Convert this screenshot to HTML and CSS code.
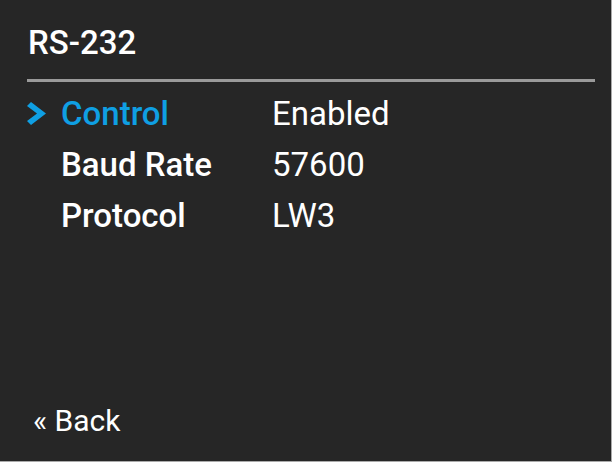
FILE: index.html
```html
<!DOCTYPE html>
<html>
<head>
    <title>RS-232</title>
    <link rel="stylesheet" href="styles.css">
</head>
<body>

<div class="screen">
    <h1 class="title">RS-232</h1>

    <ul class="menu">
        <li class="item selected">
            <svg class="cursor" width="19" height="23" viewBox="0 0 19 23">
                <polygon points="0,4 4,0 19,11.5 4,23 0,19 10,11.5" fill="currentColor"/>
            </svg>
            <span class="label">Control</span>
            <span class="value">Enabled</span>
        </li>
        <li class="item">
            <span class="label">Baud Rate</span>
            <span class="value">57600</span>
        </li>
        <li class="item">
            <span class="label">Protocol</span>
            <span class="value">LW3</span>
        </li>
    </ul>

    <div class="back">&laquo; Back</div>
</div>

</body>
</html>
```

FILE: styles.css
```css
html, body {
    margin: 0;
    padding: 0;
}
body {
    background: #262626;
    font-family: Roboto, "Liberation Sans", sans-serif;
    color: #fff;
}
.screen {
    box-sizing: border-box;
    width: 612px;
    height: 462px;
    padding: 0 16px 0 27px;
    display: flex;
    flex-direction: column;
    border-right: 1px solid #aaa;
    border-bottom: 1px solid #aaa;
}
.title {
    margin: 0;
    padding: 25px 0 18px 1px;
    font-size: 33px;
    font-weight: 500;
    line-height: 36px;
    border-bottom: 3px solid #9a9a9a;
}
.menu {
    list-style: none;
    margin: 0;
    padding: 6px 0 0;
}
.item {
    display: flex;
    align-items: center;
    height: 51px;
    font-size: 33px;
    line-height: 51px;
}
.label {
    width: 211px;
    margin-left: 34px;
    font-weight: 500;
}
.selected .label {
    color: #0f9fe3;
}
.cursor {
    color: #0f9fe3;
    width: 19px;
    margin-right: -19px;
    flex: none;
}
.value {
    font-weight: 400;
}
.back {
    margin-top: auto;
    margin-bottom: 23px;
    margin-left: 6px;
    font-size: 30px;
    line-height: 34px;
}
```
